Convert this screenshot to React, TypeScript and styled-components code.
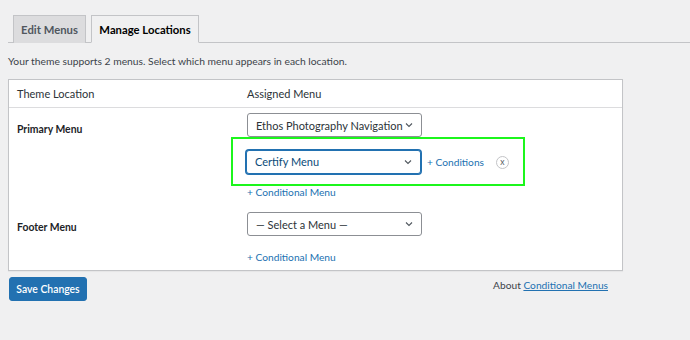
import React from "react";
import styled, { createGlobalStyle } from "styled-components";

const Global = createGlobalStyle`
  html, body { margin: 0; padding: 0; background: #f0f0f1; }
  body { font-family: Lato, "Noto Sans", sans-serif; color: #3c434a; font-size: 10.3px; }
  * { box-sizing: border-box; }
`;

const Page = styled.div`
  width: 690px;
  height: 340px;
  padding: 15px 0 0 8px;
  overflow: hidden;
`;

const TabBar = styled.div`
  display: flex;
  gap: 5px;
  padding-left: 5px;
  border-bottom: 1px solid #c3c4c7;
  height: 28px;
`;

const Tab = styled.div<{ $active?: boolean; $w: number }>`
  width: ${(p) => p.$w}px;
  display: flex;
  align-items: center;
  justify-content: center;
  font-size: 11.3px;
  font-weight: 700;
  border: 1px solid #c3c4c7;
  border-bottom: ${(p) => (p.$active ? "1px solid #f0f0f1" : "none")};
  background: ${(p) => (p.$active ? "#f0f0f1" : "#dcdcde")};
  color: ${(p) => (p.$active ? "#000" : "#50575e")};
  height: 28px;
`;

const Description = styled.p`
  margin: 0;
  padding: 12px 0 0 0;
  height: 36px;
  font-size: 10.3px;
  color: #3c434a;
`;

const Table = styled.div`
  width: 615px;
  background: #fff;
  border: 1px solid #c3c4c7;
  box-shadow: 0 1px 1px rgba(0, 0, 0, 0.04);
`;

const HeaderRow = styled.div`
  display: grid;
  grid-template-columns: 230px 1fr;
  height: 28px;
  align-items: center;
  border-bottom: 1px solid #dcdcde;
  font-size: 11px;
  color: #2c3338;
  padding-left: 8px;
`;

const Row = styled.div<{ $pt: number }>`
  display: grid;
  grid-template-columns: 230px 1fr;
  padding-left: 8px;
  padding-top: ${(p) => p.$pt}px;
`;

const LocationName = styled.div<{ $top: number }>`
  font-weight: 700;
  font-size: 10.4px;
  color: #1d2327;
  padding-top: ${(p) => p.$top}px;
`;

const Assign = styled.div<{ $pt: number; $pb: number }>`
  display: flex;
  flex-direction: column;
  align-items: flex-start;
  padding-top: ${(p) => p.$pt}px;
  padding-bottom: ${(p) => p.$pb}px;
`;

const SelectBox = styled.div<{ $focus?: boolean }>`
  width: 175px;
  height: 24px;
  border: 1px solid ${(p) => (p.$focus ? "#2271b1" : "#8c8f94")};
  box-shadow: ${(p) => (p.$focus ? "0 0 0 1px #2271b1" : "none")};
  border-radius: 3px;
  background: #fff;
  display: flex;
  align-items: center;
  justify-content: space-between;
  padding: 0 7px 0 8px;
  font-size: 11px;
  color: ${(p) => (p.$focus ? "#0a4b78" : "#2c3338")};
  white-space: nowrap;
`;

const Chevron = () => (
  <svg width="10" height="10" viewBox="0 0 20 20">
    <path d="M4 7 L10 13 L16 7" fill="none" stroke="#50575e" strokeWidth="2.2" />
  </svg>
);

const Highlight = styled.div`
  margin: 0 0 0 -16px;
  width: 294px;
  height: 49px;
  border: 2px solid #1cf61c;
  display: flex;
  align-items: center;
  padding-left: 13px;
  gap: 6px;
`;

const LinkText = styled.span`
  color: #2271b1;
  font-size: 10.2px;
`;

const RemoveBtn = styled.span`
  width: 13px;
  height: 13px;
  border-radius: 50%;
  border: 1px solid #c3c4c7;
  color: #50575e;
  font-size: 8.5px;
  display: inline-flex;
  align-items: center;
  justify-content: center;
  margin-left: 6px;
  margin-top: 2px;
  line-height: 1;
`;

const CondLink = styled.span<{ $mt: number }>`
  color: #2271b1;
  font-size: 10.2px;
  margin-top: ${(p) => p.$mt}px;
`;

const Footer = styled.div`
  display: flex;
  justify-content: space-between;
  align-items: flex-start;
  width: 615px;
  padding-top: 6px;
  padding-left: 1px;
`;

const SaveButton = styled.button`
  background: #2271b1;
  border: 1px solid #2271b1;
  color: #fff;
  border-radius: 3px;
  height: 24px;
  width: 78px;
  padding: 0;
  font-family: inherit;
  font-size: 10.4px;
  font-weight: 600;
`;

const About = styled.div`
  font-size: 10.2px;
  color: #3c434a;
  padding-top: 2px;
  padding-right: 15px;
  a { color: #2271b1; text-decoration: underline; }
`;

export default function App() {
  return (
    <Page>
      <Global />
      <TabBar>
        <Tab $w={73}>Edit Menus</Tab>
        <Tab $w={108} $active>Manage Locations</Tab>
      </TabBar>
      <Description>Your theme supports 2 menus. Select which menu appears in each location.</Description>
      <Table>
        <HeaderRow>
          <span>Theme Location</span>
          <span>Assigned Menu</span>
        </HeaderRow>
        <Row $pt={0}>
          <LocationName $top={15}>Primary Menu</LocationName>
          <Assign $pt={5} $pb={0}>
            <SelectBox>
              Ethos Photography Navigation
              <Chevron />
            </SelectBox>
            <Highlight>
              <SelectBox $focus>
                Certify Menu
                <Chevron />
              </SelectBox>
              <LinkText>+ Conditions</LinkText>
              <RemoveBtn>x</RemoveBtn>
            </Highlight>
            <CondLink $mt={0}>+ Conditional Menu</CondLink>
          </Assign>
        </Row>
        <Row $pt={3}>
          <LocationName $top={20}>Footer Menu</LocationName>
          <Assign $pt={11} $pb={7}>
            <SelectBox>
              — Select a Menu —
              <Chevron />
            </SelectBox>
            <CondLink $mt={15}>+ Conditional Menu</CondLink>
          </Assign>
        </Row>
      </Table>
      <Footer>
        <SaveButton>Save Changes</SaveButton>
        <About>
          About <a>Conditional Menus</a>
        </About>
      </Footer>
    </Page>
  );
}
